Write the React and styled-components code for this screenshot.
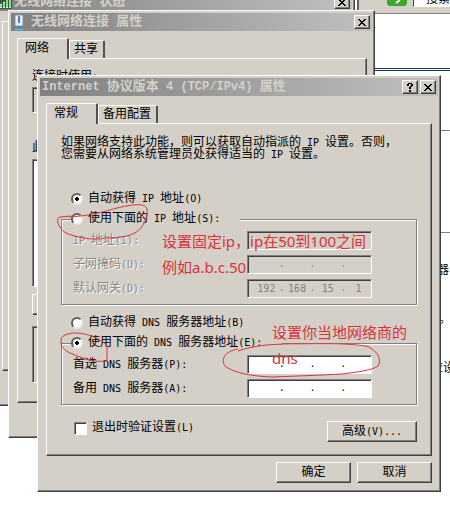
import React, { useId, useState } from 'react';
import styled, { createGlobalStyle, css } from 'styled-components';

const GlobalStyle = createGlobalStyle`
  * {
    box-sizing: border-box;
  }

  body {
    margin: 0;
    background: #fff;
    color: #000;
    font: 12px/12px 'Liberation Mono', 'Noto Sans CJK SC', sans-serif;
  }
`;

const raised = css`
  border: 1px solid;
  border-color: #fff #404040 #404040 #fff;
  box-shadow: inset -1px -1px #808080;
`;

const sunken = css`
  border: 1px solid;
  border-color: #808080 #fff #fff #808080;
  box-shadow: inset 1px 1px #404040;
`;

const Desktop = styled.div`
  position: relative;
  min-height: 100vh;
  overflow: hidden;
`;

const Browser = styled.div`
  min-height: 100vh;
  padding-left: 357px;
`;

const BrowserToolbar = styled.div`
  display: flex;
  align-items: flex-start;
  gap: 6px;
  height: 14px;
  padding-left: 28px;
  background: #d4d0c8;
  border-left: 2px solid #606060;
  border-bottom: 1px solid #808080;
`;

const SearchField = styled.div`
  flex: 1;
  height: 7px;
  padding-left: 12px;
  overflow: hidden;
  background: #fff;
  border-left: 1px solid #404040;
  border-bottom: 1px solid #fff;
  line-height: 1px;
  white-space: nowrap;
`;

const DoubleRule = styled.div`
  height: 3px;
  margin-top: 54px;
  border: solid #1c2f62;
  border-width: 1px 0;
`;

const Cell = styled.div`
  height: ${(p) => p.$height}px;
  border-bottom: 1px solid #808080;
`;

const PageText = styled.p`
  margin: 0;
  padding-top: ${(p) => p.$top}px;
  padding-left: ${(p) => p.$indent}px;
  white-space: nowrap;
`;

const Window = styled.section`
  position: absolute;
  left: ${(p) => p.$x}px;
  top: ${(p) => p.$y}px;
  width: ${(p) => p.$width}px;
  min-height: ${(p) => p.$height}px;
  padding: 2px;
  background: #d4d0c8;
  ${raised}
`;

const TitleBar = styled.header`
  display: flex;
  align-items: center;
  gap: 2px;
  height: 18px;
  padding: 0 2px;
  background: linear-gradient(90deg, #808080, #c0c0c0);
  color: #d4d0c8;
`;

const Title = styled.h1`
  flex: 1;
  margin: 0;
  padding-left: ${(p) => (p.$icon ? 4 : 0)}px;
  font-size: 13px;
  font-weight: bold;
  line-height: 18px;
  white-space: pre;
`;

const TitleButton = styled.button`
  display: flex;
  align-items: center;
  justify-content: center;
  width: 16px;
  height: 14px;
  padding: 0;
  background: #d4d0c8;
  ${raised}
`;

const Body = styled.div`
  padding: ${(p) => p.$padding};
`;

const Tabs = styled.div`
  display: flex;
  align-items: flex-end;
  height: 20px;
`;

const Tab = styled.button`
  height: ${(p) => (p.$active ? 21 : 18)}px;
  margin-bottom: ${(p) => (p.$active ? -1 : 0)}px;
  padding: ${(p) => (p.$active ? '0 18px 0 7px' : '0 5px 0 4px')};
  background: #d4d0c8;
  border: solid;
  border-width: 1px 2px 0 1px;
  border-color: #fff #505050 #fff #fff;
  border-radius: 2px 2px 0 0;
  color: #000;
  font: inherit;
  z-index: ${(p) => (p.$active ? 1 : 0)};
`;

const Panel = styled.div`
  height: ${(p) => p.$height}px;
  padding: ${(p) => p.$padding || '0'};
  ${raised}
`;

const Caption = styled.div`
  margin-top: ${(p) => p.$top}px;
`;

const Box = styled.div`
  height: ${(p) => p.$height}px;
  margin-top: ${(p) => p.$top}px;
  background: ${(p) => p.$color || '#d4d0c8'};
  ${(p) => (p.$raised ? raised : sunken)}
`;

const Half = styled.span`
  font-family: ${(p) => (p.$bold ? "'Liberation Mono'" : "'DejaVu Sans Mono'")}, monospace;
  font-size: ${(p) => (p.$bold ? 12 : 10)}px;
`;

const Description = styled.p`
  margin: 0 0 29px;
`;

const Option = styled.label`
  display: flex;
  align-items: center;
  gap: 5px;
  width: max-content;
  height: ${(p) => p.$height || 18}px;
  background: #d4d0c8;
  white-space: pre;
`;

const Radio = styled.input`
  appearance: none;
  width: 12px;
  height: 12px;
  margin: 0;
  background: #fff;
  border: 2px solid;
  border-color: #606060 #ece9e2 #ece9e2 #606060;
  border-radius: 50%;

  &:checked {
    background: radial-gradient(circle, #000 0 2px, #fff 2px);
  }
`;

const Check = styled.input`
  appearance: none;
  width: 13px;
  height: 13px;
  margin: 0;
  background: #fff;
  ${sunken}

  &:checked {
    background: radial-gradient(#000 0 3px, #fff 3px);
  }
`;

const LoneOption = styled.div`
  height: 20px;
  margin-top: ${(p) => p.$top || 0}px;
  padding-left: 10px;
`;

const Group = styled.fieldset`
  min-width: 0;
  margin: 0;
  padding: 0 44px 6px 11px;
  border: 1px solid #808080;
  box-shadow: 1px 1px #fff, inset 1px 1px #fff;
`;

const Legend = styled.legend`
  margin-left: -2px;
  padding: 0 20px 0 0;
  background: #d4d0c8;
`;

const FieldRow = styled.div`
  display: flex;
  align-items: center;
  justify-content: space-between;
  height: 19px;
  margin-top: ${(p) => (p.$first ? 3 : 5)}px;
  color: ${(p) => (p.$disabled ? '#8a8781' : '#000')};
  text-shadow: ${(p) => (p.$disabled ? '1px 1px #fff' : 'none')};
  white-space: pre;
`;

const Address = styled.div`
  display: flex;
  align-items: center;
  width: 125px;
  height: 19px;
  padding: 0 0 0 6px;
  background: ${(p) => (p.$disabled ? '#d4d0c8' : '#fff')};
  text-shadow: none;
  ${sunken}
`;

const Octet = styled.input`
  flex: 1;
  min-width: 0;
  padding: 0;
  background: transparent;
  border: 0;
  outline: 0;
  color: ${(p) => (p.disabled ? '#808080' : '#000')};
  font: 10px/12px 'DejaVu Sans Mono', monospace;
  text-align: center;
`;

const Dot = styled.span`
  width: 6px;
  font-size: 10px;
  text-align: center;
`;

const Footer = styled.div`
  display: flex;
  justify-content: flex-end;
  gap: 6px;
  margin-top: 6px;
`;

const Button = styled.button`
  width: ${(p) => p.$width}px;
  height: 21px;
  padding: 0;
  background: #d4d0c8;
  color: #000;
  font: inherit;
  ${raised}
`;

const BottomRow = styled.div`
  display: flex;
  justify-content: space-between;
  align-items: flex-start;
  margin-top: 16px;
  padding-left: 13px;
`;

const Note = styled.p`
  position: absolute;
  left: ${(p) => p.$x}px;
  top: ${(p) => p.$y}px;
  margin: 0;
  color: #d9333a;
  font: 15px/26px 'Noto Sans', 'Noto Sans CJK SC', sans-serif;
  white-space: pre;
  pointer-events: none;
`;

const Ink = styled.svg`
  position: absolute;
  left: 0;
  top: 0;
  pointer-events: none;
`;

// Half-width characters take half the advance of a Chinese character
function Text({ children, bold }) {
  return children
    .split(/([\x20-\x7e]+)/)
    .filter(Boolean)
    .map((part, i) => (/[\x20-\x7e]/.test(part) ? <Half key={i} $bold={bold}>{part}</Half> : part));
}

function CloseButton() {
  return (
    <TitleButton type="button" aria-label="关闭">
      <svg width="8" height="7" viewBox="0 0 8 7" shapeRendering="crispEdges">
        <path d="M0 0h2v1h1v1h2V1h1V0h2v1H7v1H6v1H5v1h1v1h1v1h1v1H6V6H5V5H3v1H2v1H0V6h1V5h1V4h1V3H2V2H1V1H0z" />
      </svg>
    </TitleButton>
  );
}

function HelpButton() {
  return (
    <TitleButton type="button" aria-label="帮助">
      <svg width="7" height="9" viewBox="0 0 7 9" shapeRendering="crispEdges">
        <path d="M1 0h4v1h1v2H5v1H4v2H2V4h1V3h1V1H2v2H0V1h1zM2 7h2v2H2z" />
      </svg>
    </TitleButton>
  );
}

function SignalIcon() {
  return (
    <svg width="13" height="14" viewBox="0 0 13 14">
      <path d="M0 0h13v14H0z" fill="#3c5a3f" />
      <path d="M2 13V9M5 13V7M8 13V4M11 13V1" stroke="#d9ffd2" strokeWidth="2" />
      <path d="M2 12V10M5 12V8M8 12V5M11 12V2" stroke="#35b548" strokeWidth="1" />
    </svg>
  );
}

function AdapterIcon() {
  return (
    <svg width="12" height="17" viewBox="0 0 12 17">
      <rect x="2" y="1" width="8" height="11" rx="1" fill="#e9f2fb" stroke="#7c96bd" />
      <path d="M5 2h2v7H5z" fill="#5b78b4" />
      <path d="M4 12h4v3H4z" fill="#348dc4" />
      <path d="M2 15h8v1H2z" fill="#5fd1e6" />
    </svg>
  );
}

function AddressField({ label, values = ['', '', '', ''], disabled, first }) {
  const id = useId();
  const [octets, setOctets] = useState(values);

  const handleChange = (index, value) => {
    setOctets(octets.map((octet, i) => (i === index ? value : octet)));
  };

  return (
    <FieldRow $disabled={disabled} $first={first}>
      <label htmlFor={id}><Text>{label}</Text></label>
      <Address $disabled={disabled}>
        {octets.map((octet, i) => (
          <React.Fragment key={i}>
            {i > 0 && <Dot>.</Dot>}
            <Octet
              id={i === 0 ? id : undefined}
              aria-label={i === 0 ? undefined : `${label} ${i + 1}`}
              maxLength={3}
              value={octet}
              disabled={disabled}
              onChange={(e) => handleChange(i, e.target.value)}
            />
          </React.Fragment>
        ))}
      </Address>
    </FieldRow>
  );
}

function RadioOption({ name, label, checked, onChange }) {
  return (
    <Option>
      <Radio type="radio" name={name} checked={checked} onChange={onChange} />
      <span><Text>{label}</Text></span>
    </Option>
  );
}

function StatusWindow() {
  return (
    <Window $x={-6} $y={-10} $width={361} $height={416}>
      <TitleBar>
        <SignalIcon />
        <Title><Text bold>无线网络连接 状态</Text></Title>
        <CloseButton />
      </TitleBar>
      <Body $padding="10px 5px 0 5px">
        <Panel $height={350} />
      </Body>
    </Window>
  );
}

function ConnectionWindow() {
  return (
    <Window $x={8} $y={10} $width={367} $height={428}>
      <TitleBar>
        <AdapterIcon />
        <Title $icon><Text bold>无线网络连接 属性</Text></Title>
        <CloseButton />
      </TitleBar>
      <Body $padding="7px 5px 0 6px">
        <Tabs>
          <Tab type="button" $active>网络</Tab>
          <Tab type="button">共享</Tab>
        </Tabs>
        <Panel $height={345} $padding="12px 14px 0">
          <Caption $top={0}><Text>连接时使用:</Text></Caption>
          <Box $height={26} $top={4} />
          <Caption $top={29}>此</Caption>
          <Box $height={128} $top={5} $color="#fff" />
          <Box $height={21} $top={7} $raised />
          <Box $height={57} $top={11} />
        </Panel>
      </Body>
    </Window>
  );
}

function ProtocolWindow() {
  const [ipMode, setIpMode] = useState('auto');
  const [dnsMode, setDnsMode] = useState('manual');
  const [validate, setValidate] = useState(false);

  return (
    <Window $x={37} $y={75} $width={404} $height={417}>
      <TitleBar>
        <Title><Text bold>Internet 协议版本 4 (TCP/IPv4) 属性</Text></Title>
        <HelpButton />
        <CloseButton />
      </TitleBar>
      <Body $padding="7px 6px 0 6px">
        <Tabs>
          <Tab type="button" $active>常规</Tab>
          <Tab type="button">备用配置</Tab>
        </Tabs>
        <Panel $height={333} $padding="13px 14px 0">
          <Description>
            <Text>如果网络支持此功能，则可以获取自动指派的 IP 设置。否则，</Text>
            <br />
            <Text>您需要从网络系统管理员处获得适当的 IP 设置。</Text>
          </Description>
          <LoneOption>
            <RadioOption name="ip" label="自动获得 IP 地址(O)" checked={ipMode === 'auto'} onChange={() => setIpMode('auto')} />
          </LoneOption>
          <Group>
            <Legend>
              <RadioOption name="ip" label="使用下面的 IP 地址(S):" checked={ipMode === 'manual'} onChange={() => setIpMode('manual')} />
            </Legend>
            <AddressField first disabled label="IP 地址(I):" />
            <AddressField disabled label="子网掩码(U):" />
            <AddressField disabled label="默认网关(D):" values={['192', '168', '15', '1']} />
          </Group>
          <LoneOption $top={9}>
            <RadioOption name="dns" label="自动获得 DNS 服务器地址(B)" checked={dnsMode === 'auto'} onChange={() => setDnsMode('auto')} />
          </LoneOption>
          <Group>
            <Legend>
              <RadioOption name="dns" label="使用下面的 DNS 服务器地址(E):" checked={dnsMode === 'manual'} onChange={() => setDnsMode('manual')} />
            </Legend>
            <AddressField first label="首选 DNS 服务器(P):" />
            <AddressField label="备用 DNS 服务器(A):" />
          </Group>
          <BottomRow>
            <Option $height={14}>
              <Check type="checkbox" checked={validate} onChange={(e) => setValidate(e.target.checked)} />
              <span><Text>退出时验证设置(L)</Text></span>
            </Option>
            <Button type="button" $width={90}><Text>高级(V)...</Text></Button>
          </BottomRow>
        </Panel>
        <Footer>
          <Button type="button" $width={75}>确定</Button>
          <Button type="button" $width={75}>取消</Button>
        </Footer>
      </Body>
    </Window>
  );
}

function App() {
  return (
    <Desktop>
      <GlobalStyle />
      <Browser>
        <BrowserToolbar>
          <svg width="20" height="6" viewBox="0 0 20 6">
            <path d="M0 0h20v4l-2 2H2L0 4z" fill="#39a82c" />
            <path d="M9 3l4-3" stroke="#fff" strokeWidth="2" />
          </svg>
          <SearchField>搜索</SearchField>
        </BrowserToolbar>
        <DoubleRule />
        <Cell $height={60} />
        <Cell $height={102} />
        <PageText $top={32} $indent={80}>器</PageText>
        <PageText $top={37} $indent={82}>。</PageText>
        <PageText $top={37} $indent={74}>应设</PageText>
      </Browser>
      <StatusWindow />
      <ConnectionWindow />
      <ProtocolWindow />
      <Note $x={162} $y={228}>{'设置固定ip，ip在50到100之间\n例如a.b.c.50'}</Note>
      <Note $x={272} $y={319}>{'设置你当地网络商的\ndns'}</Note>
      <Ink width="450" height="524" viewBox="0 0 450 524" fill="none" stroke="#d9333a">
        <path d="M69 217C90 216 106 211 117 208C130 205 145 202 147 209C148 216 145 223 140 229C134 236 120 238 106 238C92 241 75 237 66 233C58 228 55 218 60 217L71 216" />
        <path d="M61 342C60 335 68 333 77 333C90 334 98 338 107 345L107 360Q106 362 96 361C86 360 77 356 70 353C64 350 61 347 61 342" />
        <path d="M238 349C224 351 220 361 226 367C236 373 250 376 272 377C300 376 322 375 342 374C358 372 373 370 378 366C382 360 378 352 369 347C357 343 320 344 300 344C278 344 258 344 238 351" />
      </Ink>
    </Desktop>
  );
}

export default App;
